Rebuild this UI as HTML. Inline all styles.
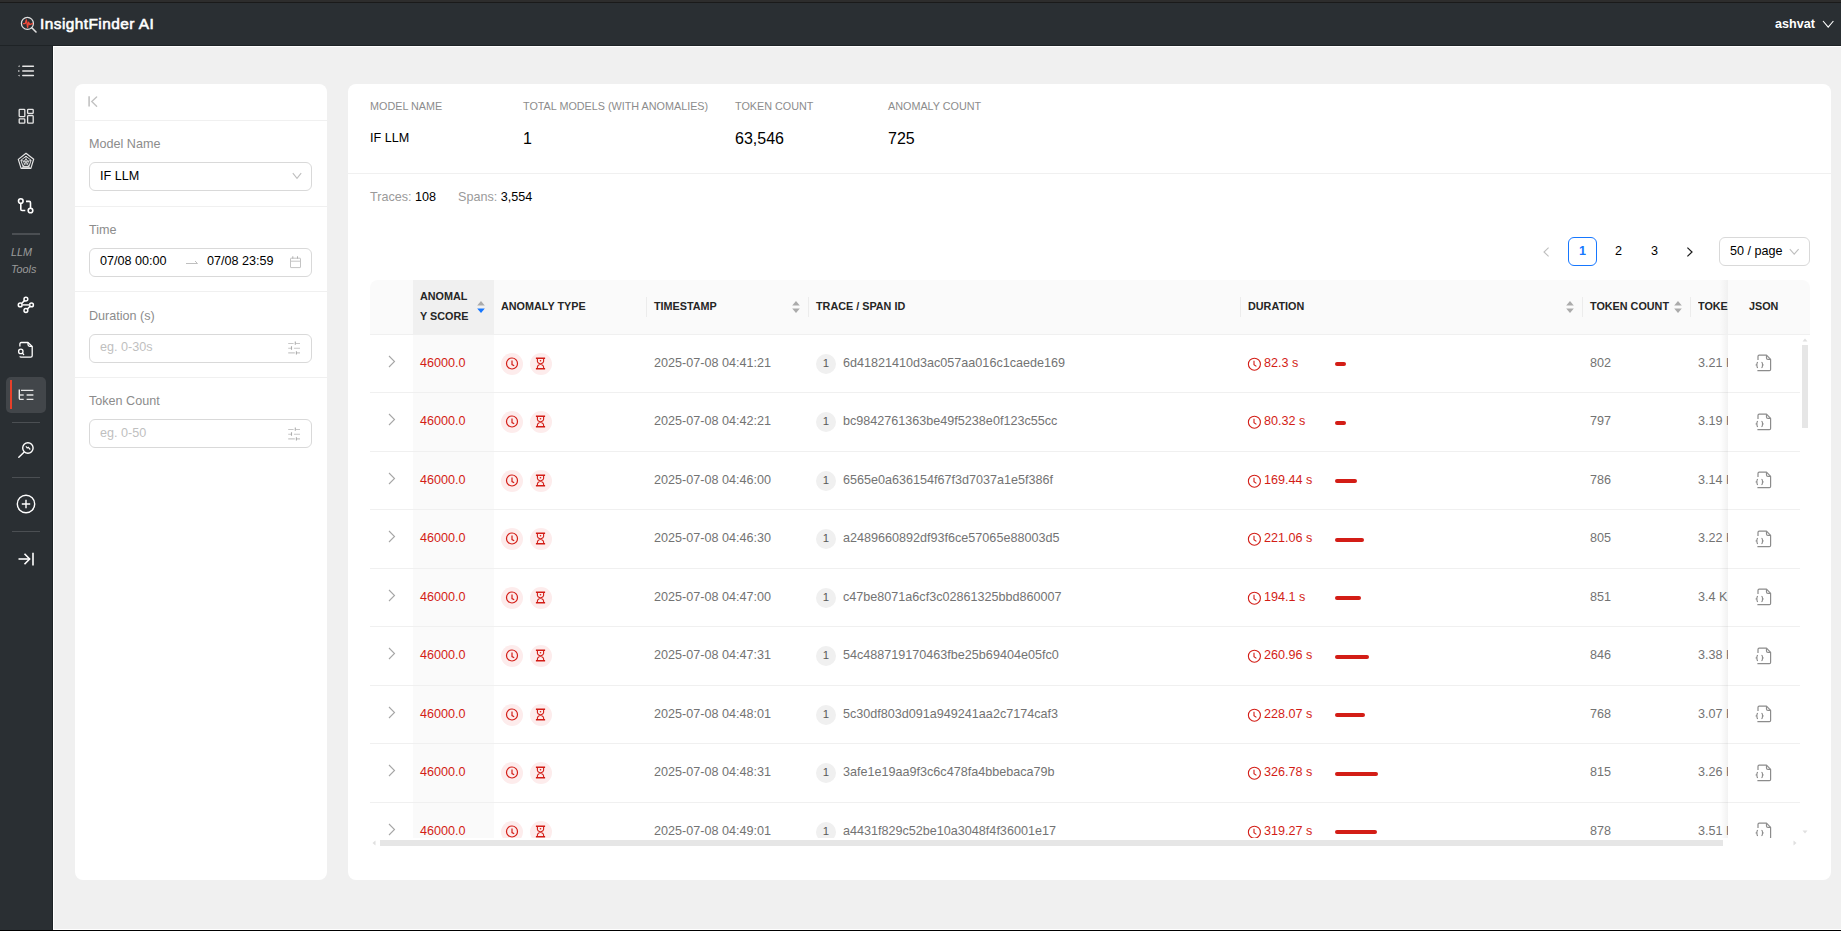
<!DOCTYPE html>
<html><head><meta charset="utf-8"><style>
*{box-sizing:border-box;margin:0;padding:0}
html,body{width:1841px;height:931px;overflow:hidden;background:#f0f0f0;font-family:"Liberation Sans",sans-serif;position:relative}
.a{position:absolute}
svg{position:absolute;overflow:visible}
.panel{background:#fff;border-radius:8px}
.sep{height:1px;background:#f0f0f0}
.lbl{font-size:12.6px;color:#8c8c8c;line-height:20px;white-space:nowrap}
.inp{border:1px solid #d9d9d9;border-radius:6px;background:#fff}
.val{font-size:12.6px;color:#000;line-height:20px;white-space:nowrap}
.ph{font-size:12.6px;color:#bfbfbf;line-height:20px;white-space:nowrap}
.stl{font-size:10.8px;color:#8c8c8c;line-height:16px;white-space:nowrap}
.stv{font-size:16px;color:#000;line-height:20px;white-space:nowrap}
.th{font-size:10.8px;font-weight:bold;color:#262626;line-height:20px;white-space:nowrap}
.c{font-size:12.6px;line-height:20px;white-space:nowrap}
.red{color:#d31d16}
.gray{color:#737373}
.hsep{width:1px;height:20px;background:#ececec;top:297px}
.side-sep{left:12px;width:28px;height:1px;background:#4b4f53}
</style></head><body>
<div class="a" style="left:0;top:0;width:1841px;height:2px;background:#2d2d2d"></div>
<div class="a" style="left:0;top:2px;width:1841px;height:1px;background:#1a1a1a"></div>
<div class="a" style="left:0;top:3px;width:1841px;height:42px;background:#2a2f33"></div>
<div class="a" style="left:0;top:45px;width:1841px;height:1px;background:#1e2326"></div>
<div class="a" style="left:53px;top:46px;width:1788px;height:1px;background:#fff"></div>
<div class="a" style="left:0;top:46px;width:52px;height:884px;background:#2a2f33"></div>
<div class="a" style="left:52px;top:45px;width:1px;height:885px;background:#1e2326"></div>
<div class="a" style="left:53px;top:46px;width:1px;height:884px;background:#fff"></div>
<div class="a" style="left:53px;top:929px;width:1788px;height:1px;background:#fff"></div>
<div class="a" style="left:0;top:930px;width:1841px;height:1px;background:#000"></div>
<svg style="left:19px;top:15px" width="20" height="20" viewBox="0 0 20 20"><circle cx="8.4" cy="8.4" r="6" fill="none" stroke="#e0e0e0" stroke-width="1.3"/><line x1="12.8" y1="12.8" x2="17" y2="17" stroke="#e0e0e0" stroke-width="1.6" stroke-linecap="round"/><path d="M4 8.6 L6.2 8.6 L7.4 4.8 L8.6 12.3 L9.6 7.2 L10.6 9.6 L14 8.4" fill="none" stroke="#ef4a3a" stroke-width="1.3" stroke-linejoin="round"/></svg>
<div class="a" style="left:40px;top:13.5px;font-size:15.4px;font-weight:normal;-webkit-text-stroke:0.6px #fff;color:#fff;letter-spacing:0.45px;line-height:20px;white-space:nowrap">InsightFinder AI</div>
<div class="a" style="left:1775px;top:14px;font-size:12.6px;font-weight:bold;color:#fff;line-height:20px">ashvat</div>
<svg style="left:1822px;top:20px" width="12" height="9" viewBox="0 0 12 9"><path d="M1 1 L6.2 7.2 L11.4 1" fill="none" stroke="#fff" stroke-width="1.1"/></svg>
<svg style="left:17px;top:64px" width="18" height="14" viewBox="0 0 18 14"><path d="M5.8 2.2H16.4M5.8 7H16.4M5.8 11.6H16.4" stroke="#e6e6e6" stroke-width="1.5" stroke-linecap="round"/><path d="M1 2.2L2.6 1.3V3.1Z M1.2 6.2H2.4V7.8H1.2Z M1 11.6L2.6 10.7V12.5Z" fill="#e6e6e6"/></svg>
<svg style="left:18px;top:108px" width="16" height="16" viewBox="0 0 16 16"><g fill="none" stroke="#e6e6e6" stroke-width="1.3"><rect x="1.2" y="1.3" width="5.6" height="7.3" rx="0.7"/><rect x="1.2" y="10.9" width="5.6" height="4.3" rx="0.7"/><rect x="9.6" y="1.3" width="5.6" height="4.2" rx="0.7"/><rect x="9.6" y="7.7" width="5.6" height="7.5" rx="0.7"/></g></svg>
<svg style="left:17px;top:152px" width="18" height="18" viewBox="0 0 18 18"><path d="M4.1 16.4 L13.9 16.4 L12.4 14.4 L5.6 14.4 Z" fill="#b8b8b8"/><g fill="none" stroke="#e6e6e6" stroke-width="1.2" stroke-linejoin="round"><path d="M9 1.3 L16.7 7.2 L13.9 16.4 L4.1 16.4 L1.3 7.4 Z"/><path d="M9 4.2 L14.1 8.3 L12 14.4 L6 14.4 L3.9 8.3 Z" stroke-width="1"/><path d="M9 7.2 L11.5 9.1 L10.6 12 L7.4 12 L6.5 9.1 Z M9 9.9 V4.2 M9 9.9 L14.1 8.3 M9 9.9 L12 14.4 M9 9.9 L6 14.4 M9 9.9 L3.9 8.3" stroke-width="0.8"/></g></svg>
<svg style="left:17px;top:197px" width="18" height="18" viewBox="0 0 18 18"><g fill="none" stroke="#fff" stroke-width="1.6"><circle cx="3.8" cy="4" r="2.3"/><circle cx="13.5" cy="13.5" r="2.3"/><path d="M3.8 6.3 V12.2 Q3.8 13.5 5.1 13.5 H8.3"/><path d="M9 4.4 H12.2 Q13.5 4.4 13.5 5.7 V11.2"/></g></svg>
<div class="a" style="left:12px;top:233px;width:28px;height:2px;background:#4b4f53"></div>
<div class="a" style="left:11px;top:244px;font-size:10.8px;font-style:italic;color:#9b9b9b;line-height:17px;white-space:nowrap">LLM<br>Tools</div>
<svg style="left:17px;top:296px" width="18" height="18" viewBox="0 0 18 18"><g fill="none" stroke="#fff" stroke-width="1.5"><circle cx="3.2" cy="8.9" r="1.9"/><circle cx="8.9" cy="3.2" r="1.9"/><circle cx="14.5" cy="8.9" r="1.9"/><circle cx="8.9" cy="14.5" r="1.9"/><path d="M4.6 7.5 L7.5 4.6 M10.3 13.1 L13.1 10.3"/><path d="M5.1 8.9 H12.6" stroke="#ddd" stroke-width="1.7"/></g></svg>
<svg style="left:17px;top:341px" width="18" height="18" viewBox="0 0 18 18"><g fill="none" stroke="#fff" stroke-width="1.3" stroke-linejoin="round"><path d="M2.9 5.6 V2.9 Q2.9 1.5 4.3 1.5 H11 L15.2 5.5 V14.8 Q15.2 16.2 13.8 16.2 H4.3 Q3 16.2 3 15.2"/><path d="M11 1.6 V3.6 Q11 5.4 12.8 5.4 H15.1"/><circle cx="3.8" cy="10.4" r="2.2"/><path d="M5.5 12.2 L6.7 13.6" stroke-linecap="round"/></g></svg>
<div class="a" style="left:6px;top:377px;width:40px;height:36px;background:#42464a;border-radius:5px"></div>
<div class="a" style="left:10px;top:380px;width:2px;height:29px;background:#e8402a"></div>
<svg style="left:17px;top:388px" width="18" height="14" viewBox="0 0 18 14"><g fill="none" stroke="#e6e6e6" stroke-width="1.4"><path d="M2.3 1.6 V10.2 Q2.3 11.4 3.5 11.4 H6.7"/><path d="M2.3 7 H6.7"/><path d="M4 2.4 H16.4 M9.6 7 H16.4 M9.6 11.4 H16.4"/></g></svg>
<div class="a side-sep" style="top:422px"></div>
<svg style="left:17px;top:441px" width="18" height="18" viewBox="0 0 18 18"><g fill="none" stroke="#fff" stroke-width="1.4"><circle cx="10.9" cy="7" r="5.2"/><path d="M7 11.2 L1.8 16.2" stroke-linecap="round"/><path d="M8.9 5.2 L10.2 7 L11.2 6.3 L13.3 8.5" stroke-width="1.1"/></g></svg>
<div class="a side-sep" style="top:477px"></div>
<svg style="left:16px;top:494px" width="20" height="20" viewBox="0 0 20 20"><g fill="none" stroke="#fff" stroke-width="1.4"><circle cx="10" cy="10" r="8.7"/><path d="M10 5.8 V14.2 M5.8 10 H14.2"/></g></svg>
<div class="a side-sep" style="top:531px"></div>
<svg style="left:17px;top:552px" width="18" height="14" viewBox="0 0 18 14"><g fill="none" stroke="#fff" stroke-width="1.6"><path d="M1.5 7 H12.5"/><path d="M7.5 1.8 L12.6 7 L7.5 12.2"/><path d="M16 0.8 V13.4"/></g></svg>
<div class="a panel" style="left:75px;top:84px;width:252px;height:796px"></div>
<svg style="left:87.8px;top:96px" width="11" height="11" viewBox="0 0 11 11"><path d="M1.1 0.3 V10.5" fill="none" stroke="#c2c2c2" stroke-width="1.6"/><path d="M8.6 1 L3.8 5.6 L8.6 10.2" fill="none" stroke="#c2c2c2" stroke-width="1.4" stroke-linecap="round"/></svg>
<div class="a sep" style="left:75px;top:120px;width:252px"></div>
<div class="a lbl" style="left:89px;top:134px">Model Name</div>
<div class="a inp" style="left:89px;top:162px;width:223px;height:29px"></div>
<div class="a val" style="left:100px;top:166px">IF LLM</div>
<svg style="left:292px;top:172px" width="10" height="8" viewBox="0 0 10 8"><path d="M0.8 1.2 L5 6.4 L9.2 1.2" fill="none" stroke="#bfbfbf" stroke-width="1.1"/></svg>
<div class="a sep" style="left:75px;top:206px;width:252px"></div>
<div class="a lbl" style="left:89px;top:220px">Time</div>
<div class="a inp" style="left:89px;top:248px;width:223px;height:29px"></div>
<div class="a val" style="left:100px;top:251px">07/08 00:00</div>
<svg style="left:185px;top:259px" width="14" height="6" viewBox="0 0 14 6"><path d="M1 4.5 H12.5 L10 2" fill="none" stroke="#bfbfbf" stroke-width="1"/></svg>
<div class="a val" style="left:207px;top:251px">07/08 23:59</div>
<svg style="left:288px;top:256px" width="14" height="13" viewBox="0 0 14 13"><g fill="none" stroke="#c4c4c4" stroke-width="1"><rect x="2.5" y="2.2" width="10" height="9.4" rx="0.4"/><path d="M2.5 5.2 H12.5"/><path d="M4.8 0.3 V2.6 M9.5 0.3 V2.6" stroke="#b0b0b0"/></g></svg>
<div class="a sep" style="left:75px;top:291px;width:252px"></div>
<div class="a lbl" style="left:89px;top:306px">Duration (s)</div>
<div class="a inp" style="left:89px;top:334px;width:223px;height:29px"></div>
<div class="a ph" style="left:100px;top:337px">eg. 0-30s</div>
<svg style="left:288px;top:341px" width="13" height="13" viewBox="0 0 13 13"><g fill="none" stroke="#c8c8c8" stroke-width="1.1"><path d="M0.2 2.5 H5.6 M7.9 2.5 H12 M0.2 7.2 H3.5 M5.9 7.2 H12 M0.2 11.9 H6.8 M8.6 11.9 H12"/></g><g fill="none" stroke="#acacac" stroke-width="1.1"><path d="M7.3 0.4 V3.8 M3.5 5.3 V8.7 M8.4 10.2 V13.6"/></g></svg>
<div class="a sep" style="left:75px;top:377px;width:252px"></div>
<div class="a lbl" style="left:89px;top:391px">Token Count</div>
<div class="a inp" style="left:89px;top:419px;width:223px;height:29px"></div>
<div class="a ph" style="left:100px;top:423px">eg. 0-50</div>
<svg style="left:288px;top:427px" width="13" height="13" viewBox="0 0 13 13"><g fill="none" stroke="#c8c8c8" stroke-width="1.1"><path d="M0.2 2.5 H5.6 M7.9 2.5 H12 M0.2 7.2 H3.5 M5.9 7.2 H12 M0.2 11.9 H6.8 M8.6 11.9 H12"/></g><g fill="none" stroke="#acacac" stroke-width="1.1"><path d="M7.3 0.4 V3.8 M3.5 5.3 V8.7 M8.4 10.2 V13.6"/></g></svg>
<div class="a panel" style="left:348px;top:84px;width:1483px;height:796px"></div>
<div class="a stl" style="left:370px;top:98px">MODEL NAME</div>
<div class="a stl" style="left:523px;top:98px">TOTAL MODELS (WITH ANOMALIES)</div>
<div class="a stl" style="left:735px;top:98px">TOKEN COUNT</div>
<div class="a stl" style="left:888px;top:98px">ANOMALY COUNT</div>
<div class="a val" style="left:370px;top:128px">IF LLM</div>
<div class="a stv" style="left:523px;top:129px">1</div>
<div class="a stv" style="left:735px;top:129px">63,546</div>
<div class="a stv" style="left:888px;top:129px">725</div>
<div class="a sep" style="left:348px;top:173px;width:1483px"></div>
<div class="a c" style="left:370px;top:187px;color:#9a9a9a">Traces: <span style="color:#000">108</span></div>
<div class="a c" style="left:458px;top:187px;color:#9a9a9a">Spans: <span style="color:#000">3,554</span></div>
<svg style="left:1541px;top:246px" width="10" height="12" viewBox="0 0 10 12"><path d="M7.6 1.6 L3 6 L7.6 10.4" fill="none" stroke="#bfbfbf" stroke-width="1.1"/></svg>
<div class="a" style="left:1568px;top:237px;width:29px;height:29px;border:1px solid #1677ff;border-radius:6px;font-size:12.6px;font-weight:bold;color:#1677ff;line-height:26px;text-align:center">1</div>
<div class="a c" style="left:1604.5px;top:241px;width:28px;text-align:center;color:#000">2</div>
<div class="a c" style="left:1640.5px;top:241px;width:28px;text-align:center;color:#000">3</div>
<svg style="left:1685px;top:246px" width="10" height="12" viewBox="0 0 10 12"><path d="M2.4 1.6 L7 6 L2.4 10.4" fill="none" stroke="#1a1a1a" stroke-width="1.2"/></svg>
<div class="a inp" style="left:1719px;top:237px;width:91px;height:29px"></div>
<div class="a val" style="left:1730px;top:241px">50 / page</div>
<svg style="left:1789px;top:248px" width="11" height="8" viewBox="0 0 11 8"><path d="M0.8 1.2 L5.2 6.2 L9.6 1.2" fill="none" stroke="#bfbfbf" stroke-width="1.1"/></svg>
<div class="a" style="left:370px;top:280px;width:1440px;height:55px;background:#fafafa;border-radius:8px 8px 0 0;border-bottom:1px solid #f0f0f0"></div>
<div class="a" style="left:413px;top:280px;width:80.5px;height:54px;background:#f0f0f0"></div>
<div class="a th" style="left:420px;top:286px;line-height:20px">ANOMAL<br>Y SCORE</div>
<svg style="left:477px;top:301px" width="8" height="12" viewBox="0 0 8 12"><path d="M4 0 L7.8 4.6 L0.2 4.6 Z" fill="#ababab"/><path d="M4 12 L7.8 7.4 L0.2 7.4 Z" fill="#1677ff"/></svg>
<div class="a th" style="left:501px;top:296px">ANOMALY TYPE</div>
<div class="a hsep" style="left:646px"></div>
<div class="a th" style="left:654px;top:296px">TIMESTAMP</div>
<svg style="left:792px;top:301px" width="8" height="12" viewBox="0 0 8 12"><path d="M4 0 L7.8 4.6 L0.2 4.6 Z" fill="#ababab"/><path d="M4 12 L7.8 7.4 L0.2 7.4 Z" fill="#ababab"/></svg>
<div class="a hsep" style="left:808px"></div>
<div class="a th" style="left:816px;top:296px">TRACE / SPAN ID</div>
<div class="a hsep" style="left:1240px"></div>
<div class="a th" style="left:1248px;top:296px">DURATION</div>
<svg style="left:1566px;top:301px" width="8" height="12" viewBox="0 0 8 12"><path d="M4 0 L7.8 4.6 L0.2 4.6 Z" fill="#ababab"/><path d="M4 12 L7.8 7.4 L0.2 7.4 Z" fill="#ababab"/></svg>
<div class="a hsep" style="left:1582px"></div>
<div class="a th" style="left:1590px;top:296px">TOKEN COUNT</div>
<svg style="left:1674px;top:301px" width="8" height="12" viewBox="0 0 8 12"><path d="M4 0 L7.8 4.6 L0.2 4.6 Z" fill="#ababab"/><path d="M4 12 L7.8 7.4 L0.2 7.4 Z" fill="#ababab"/></svg>
<div class="a hsep" style="left:1690px"></div>
<div class="a" style="left:1698px;top:296px;width:30px;overflow:hidden"><div class="th">TOKEN COST</div></div>
<div class="a" style="left:370px;top:335px;width:1430px;height:503px;overflow:hidden">
<div class="a" style="left:43px;top:0;width:80.5px;height:503px;background:#fafafa"></div>
<div class="a" style="left:0;top:-0.5px;width:1430px;height:58.5px;border-bottom:1px solid #f0f0f0"></div>
<svg style="left:18px;top:19.5px" width="8" height="13" viewBox="0 0 8 13"><path d="M1 1 L6.5 6.5 L1 12" fill="none" stroke="#a6a6a6" stroke-width="1.1"/></svg>
<div class="a c red" style="left:50px;top:17.5px">46000.0</div>
<div class="a" style="left:131px;top:17.5px;width:22px;height:22px;border-radius:50%;background:#fdecec"></div>
<div class="a" style="left:160px;top:17.5px;width:22px;height:22px;border-radius:50%;background:#fdecec"></div>
<svg style="left:135px;top:21.5px" width="14" height="14" viewBox="0 0 14 14"><g fill="none" stroke="#d31d16" stroke-width="1.2"><circle cx="7" cy="6.5" r="5.5"/><path d="M7 3.4 V7.6 L9.2 8.8"/></g></svg>
<svg style="left:164px;top:21.5px" width="14" height="14" viewBox="0 0 14 14"><g fill="none" stroke="#d31d16" stroke-width="1.1"><path d="M1.9 1.3 H11.1 M1.9 11.8 H11.1" stroke-width="1.6"/><path d="M3.4 1.2 V4.4 Q3.4 5.7 6.5 7.1 Q9.6 5.7 9.6 4.4 V1.2 M3.4 11.9 V9.8 Q3.4 8.5 6.5 7.1 Q9.6 8.5 9.6 9.8 V11.9"/></g><circle cx="6.5" cy="3.8" r="0.8" fill="#d31d16"/></svg>
<div class="a c gray" style="left:284px;top:17.5px">2025-07-08 04:41:21</div>
<div class="a" style="left:446px;top:18.5px;width:20px;height:20px;border-radius:50%;background:#f0f0f0;font-size:11.4px;color:#595959;line-height:18.4px;text-align:center">1</div>
<div class="a c gray" style="left:473px;top:17.5px">6d41821410d3ac057aa016c1caede169</div>
<svg style="left:877px;top:21.5px" width="14" height="14" viewBox="0 0 14 14"><g fill="none" stroke="#d31d16" stroke-width="1.1"><circle cx="7.4" cy="7.2" r="6"/><path d="M7 3.8 V7.8 L9.4 9.4"/></g></svg>
<div class="a c red" style="left:894px;top:17.5px">82.3 s</div>
<div class="a" style="left:965px;top:27.0px;width:11px;height:4.4px;border-radius:3px;background:#d31d16"></div>
<div class="a c gray" style="left:1220px;top:17.5px">802</div>
<div class="a" style="left:1328px;top:17.5px;width:30px;overflow:hidden"><div class="c gray">3.21 K</div></div>
<div class="a" style="left:0;top:58.0px;width:1430px;height:58.5px;border-bottom:1px solid #f0f0f0"></div>
<svg style="left:18px;top:78.0px" width="8" height="13" viewBox="0 0 8 13"><path d="M1 1 L6.5 6.5 L1 12" fill="none" stroke="#a6a6a6" stroke-width="1.1"/></svg>
<div class="a c red" style="left:50px;top:76.0px">46000.0</div>
<div class="a" style="left:131px;top:76.0px;width:22px;height:22px;border-radius:50%;background:#fdecec"></div>
<div class="a" style="left:160px;top:76.0px;width:22px;height:22px;border-radius:50%;background:#fdecec"></div>
<svg style="left:135px;top:80.0px" width="14" height="14" viewBox="0 0 14 14"><g fill="none" stroke="#d31d16" stroke-width="1.2"><circle cx="7" cy="6.5" r="5.5"/><path d="M7 3.4 V7.6 L9.2 8.8"/></g></svg>
<svg style="left:164px;top:80.0px" width="14" height="14" viewBox="0 0 14 14"><g fill="none" stroke="#d31d16" stroke-width="1.1"><path d="M1.9 1.3 H11.1 M1.9 11.8 H11.1" stroke-width="1.6"/><path d="M3.4 1.2 V4.4 Q3.4 5.7 6.5 7.1 Q9.6 5.7 9.6 4.4 V1.2 M3.4 11.9 V9.8 Q3.4 8.5 6.5 7.1 Q9.6 8.5 9.6 9.8 V11.9"/></g><circle cx="6.5" cy="3.8" r="0.8" fill="#d31d16"/></svg>
<div class="a c gray" style="left:284px;top:76.0px">2025-07-08 04:42:21</div>
<div class="a" style="left:446px;top:77.0px;width:20px;height:20px;border-radius:50%;background:#f0f0f0;font-size:11.4px;color:#595959;line-height:18.4px;text-align:center">1</div>
<div class="a c gray" style="left:473px;top:76.0px">bc9842761363be49f5238e0f123c55cc</div>
<svg style="left:877px;top:80.0px" width="14" height="14" viewBox="0 0 14 14"><g fill="none" stroke="#d31d16" stroke-width="1.1"><circle cx="7.4" cy="7.2" r="6"/><path d="M7 3.8 V7.8 L9.4 9.4"/></g></svg>
<div class="a c red" style="left:894px;top:76.0px">80.32 s</div>
<div class="a" style="left:965px;top:85.5px;width:10.5px;height:4.4px;border-radius:3px;background:#d31d16"></div>
<div class="a c gray" style="left:1220px;top:76.0px">797</div>
<div class="a" style="left:1328px;top:76.0px;width:30px;overflow:hidden"><div class="c gray">3.19 K</div></div>
<div class="a" style="left:0;top:116.5px;width:1430px;height:58.5px;border-bottom:1px solid #f0f0f0"></div>
<svg style="left:18px;top:136.5px" width="8" height="13" viewBox="0 0 8 13"><path d="M1 1 L6.5 6.5 L1 12" fill="none" stroke="#a6a6a6" stroke-width="1.1"/></svg>
<div class="a c red" style="left:50px;top:134.5px">46000.0</div>
<div class="a" style="left:131px;top:134.5px;width:22px;height:22px;border-radius:50%;background:#fdecec"></div>
<div class="a" style="left:160px;top:134.5px;width:22px;height:22px;border-radius:50%;background:#fdecec"></div>
<svg style="left:135px;top:138.5px" width="14" height="14" viewBox="0 0 14 14"><g fill="none" stroke="#d31d16" stroke-width="1.2"><circle cx="7" cy="6.5" r="5.5"/><path d="M7 3.4 V7.6 L9.2 8.8"/></g></svg>
<svg style="left:164px;top:138.5px" width="14" height="14" viewBox="0 0 14 14"><g fill="none" stroke="#d31d16" stroke-width="1.1"><path d="M1.9 1.3 H11.1 M1.9 11.8 H11.1" stroke-width="1.6"/><path d="M3.4 1.2 V4.4 Q3.4 5.7 6.5 7.1 Q9.6 5.7 9.6 4.4 V1.2 M3.4 11.9 V9.8 Q3.4 8.5 6.5 7.1 Q9.6 8.5 9.6 9.8 V11.9"/></g><circle cx="6.5" cy="3.8" r="0.8" fill="#d31d16"/></svg>
<div class="a c gray" style="left:284px;top:134.5px">2025-07-08 04:46:00</div>
<div class="a" style="left:446px;top:135.5px;width:20px;height:20px;border-radius:50%;background:#f0f0f0;font-size:11.4px;color:#595959;line-height:18.4px;text-align:center">1</div>
<div class="a c gray" style="left:473px;top:134.5px">6565e0a636154f67f3d7037a1e5f386f</div>
<svg style="left:877px;top:138.5px" width="14" height="14" viewBox="0 0 14 14"><g fill="none" stroke="#d31d16" stroke-width="1.1"><circle cx="7.4" cy="7.2" r="6"/><path d="M7 3.8 V7.8 L9.4 9.4"/></g></svg>
<div class="a c red" style="left:894px;top:134.5px">169.44 s</div>
<div class="a" style="left:965px;top:144.0px;width:22px;height:4.4px;border-radius:3px;background:#d31d16"></div>
<div class="a c gray" style="left:1220px;top:134.5px">786</div>
<div class="a" style="left:1328px;top:134.5px;width:30px;overflow:hidden"><div class="c gray">3.14 K</div></div>
<div class="a" style="left:0;top:175.0px;width:1430px;height:58.5px;border-bottom:1px solid #f0f0f0"></div>
<svg style="left:18px;top:195.0px" width="8" height="13" viewBox="0 0 8 13"><path d="M1 1 L6.5 6.5 L1 12" fill="none" stroke="#a6a6a6" stroke-width="1.1"/></svg>
<div class="a c red" style="left:50px;top:193.0px">46000.0</div>
<div class="a" style="left:131px;top:193.0px;width:22px;height:22px;border-radius:50%;background:#fdecec"></div>
<div class="a" style="left:160px;top:193.0px;width:22px;height:22px;border-radius:50%;background:#fdecec"></div>
<svg style="left:135px;top:197.0px" width="14" height="14" viewBox="0 0 14 14"><g fill="none" stroke="#d31d16" stroke-width="1.2"><circle cx="7" cy="6.5" r="5.5"/><path d="M7 3.4 V7.6 L9.2 8.8"/></g></svg>
<svg style="left:164px;top:197.0px" width="14" height="14" viewBox="0 0 14 14"><g fill="none" stroke="#d31d16" stroke-width="1.1"><path d="M1.9 1.3 H11.1 M1.9 11.8 H11.1" stroke-width="1.6"/><path d="M3.4 1.2 V4.4 Q3.4 5.7 6.5 7.1 Q9.6 5.7 9.6 4.4 V1.2 M3.4 11.9 V9.8 Q3.4 8.5 6.5 7.1 Q9.6 8.5 9.6 9.8 V11.9"/></g><circle cx="6.5" cy="3.8" r="0.8" fill="#d31d16"/></svg>
<div class="a c gray" style="left:284px;top:193.0px">2025-07-08 04:46:30</div>
<div class="a" style="left:446px;top:194.0px;width:20px;height:20px;border-radius:50%;background:#f0f0f0;font-size:11.4px;color:#595959;line-height:18.4px;text-align:center">1</div>
<div class="a c gray" style="left:473px;top:193.0px">a2489660892df93f6ce57065e88003d5</div>
<svg style="left:877px;top:197.0px" width="14" height="14" viewBox="0 0 14 14"><g fill="none" stroke="#d31d16" stroke-width="1.1"><circle cx="7.4" cy="7.2" r="6"/><path d="M7 3.8 V7.8 L9.4 9.4"/></g></svg>
<div class="a c red" style="left:894px;top:193.0px">221.06 s</div>
<div class="a" style="left:965px;top:202.5px;width:29px;height:4.4px;border-radius:3px;background:#d31d16"></div>
<div class="a c gray" style="left:1220px;top:193.0px">805</div>
<div class="a" style="left:1328px;top:193.0px;width:30px;overflow:hidden"><div class="c gray">3.22 K</div></div>
<div class="a" style="left:0;top:233.5px;width:1430px;height:58.5px;border-bottom:1px solid #f0f0f0"></div>
<svg style="left:18px;top:253.5px" width="8" height="13" viewBox="0 0 8 13"><path d="M1 1 L6.5 6.5 L1 12" fill="none" stroke="#a6a6a6" stroke-width="1.1"/></svg>
<div class="a c red" style="left:50px;top:251.5px">46000.0</div>
<div class="a" style="left:131px;top:251.5px;width:22px;height:22px;border-radius:50%;background:#fdecec"></div>
<div class="a" style="left:160px;top:251.5px;width:22px;height:22px;border-radius:50%;background:#fdecec"></div>
<svg style="left:135px;top:255.5px" width="14" height="14" viewBox="0 0 14 14"><g fill="none" stroke="#d31d16" stroke-width="1.2"><circle cx="7" cy="6.5" r="5.5"/><path d="M7 3.4 V7.6 L9.2 8.8"/></g></svg>
<svg style="left:164px;top:255.5px" width="14" height="14" viewBox="0 0 14 14"><g fill="none" stroke="#d31d16" stroke-width="1.1"><path d="M1.9 1.3 H11.1 M1.9 11.8 H11.1" stroke-width="1.6"/><path d="M3.4 1.2 V4.4 Q3.4 5.7 6.5 7.1 Q9.6 5.7 9.6 4.4 V1.2 M3.4 11.9 V9.8 Q3.4 8.5 6.5 7.1 Q9.6 8.5 9.6 9.8 V11.9"/></g><circle cx="6.5" cy="3.8" r="0.8" fill="#d31d16"/></svg>
<div class="a c gray" style="left:284px;top:251.5px">2025-07-08 04:47:00</div>
<div class="a" style="left:446px;top:252.5px;width:20px;height:20px;border-radius:50%;background:#f0f0f0;font-size:11.4px;color:#595959;line-height:18.4px;text-align:center">1</div>
<div class="a c gray" style="left:473px;top:251.5px">c47be8071a6cf3c02861325bbd860007</div>
<svg style="left:877px;top:255.5px" width="14" height="14" viewBox="0 0 14 14"><g fill="none" stroke="#d31d16" stroke-width="1.1"><circle cx="7.4" cy="7.2" r="6"/><path d="M7 3.8 V7.8 L9.4 9.4"/></g></svg>
<div class="a c red" style="left:894px;top:251.5px">194.1 s</div>
<div class="a" style="left:965px;top:261.0px;width:25.5px;height:4.4px;border-radius:3px;background:#d31d16"></div>
<div class="a c gray" style="left:1220px;top:251.5px">851</div>
<div class="a" style="left:1328px;top:251.5px;width:30px;overflow:hidden"><div class="c gray">3.4 K</div></div>
<div class="a" style="left:0;top:292.0px;width:1430px;height:58.5px;border-bottom:1px solid #f0f0f0"></div>
<svg style="left:18px;top:312.0px" width="8" height="13" viewBox="0 0 8 13"><path d="M1 1 L6.5 6.5 L1 12" fill="none" stroke="#a6a6a6" stroke-width="1.1"/></svg>
<div class="a c red" style="left:50px;top:310.0px">46000.0</div>
<div class="a" style="left:131px;top:310.0px;width:22px;height:22px;border-radius:50%;background:#fdecec"></div>
<div class="a" style="left:160px;top:310.0px;width:22px;height:22px;border-radius:50%;background:#fdecec"></div>
<svg style="left:135px;top:314.0px" width="14" height="14" viewBox="0 0 14 14"><g fill="none" stroke="#d31d16" stroke-width="1.2"><circle cx="7" cy="6.5" r="5.5"/><path d="M7 3.4 V7.6 L9.2 8.8"/></g></svg>
<svg style="left:164px;top:314.0px" width="14" height="14" viewBox="0 0 14 14"><g fill="none" stroke="#d31d16" stroke-width="1.1"><path d="M1.9 1.3 H11.1 M1.9 11.8 H11.1" stroke-width="1.6"/><path d="M3.4 1.2 V4.4 Q3.4 5.7 6.5 7.1 Q9.6 5.7 9.6 4.4 V1.2 M3.4 11.9 V9.8 Q3.4 8.5 6.5 7.1 Q9.6 8.5 9.6 9.8 V11.9"/></g><circle cx="6.5" cy="3.8" r="0.8" fill="#d31d16"/></svg>
<div class="a c gray" style="left:284px;top:310.0px">2025-07-08 04:47:31</div>
<div class="a" style="left:446px;top:311.0px;width:20px;height:20px;border-radius:50%;background:#f0f0f0;font-size:11.4px;color:#595959;line-height:18.4px;text-align:center">1</div>
<div class="a c gray" style="left:473px;top:310.0px">54c488719170463fbe25b69404e05fc0</div>
<svg style="left:877px;top:314.0px" width="14" height="14" viewBox="0 0 14 14"><g fill="none" stroke="#d31d16" stroke-width="1.1"><circle cx="7.4" cy="7.2" r="6"/><path d="M7 3.8 V7.8 L9.4 9.4"/></g></svg>
<div class="a c red" style="left:894px;top:310.0px">260.96 s</div>
<div class="a" style="left:965px;top:319.5px;width:34px;height:4.4px;border-radius:3px;background:#d31d16"></div>
<div class="a c gray" style="left:1220px;top:310.0px">846</div>
<div class="a" style="left:1328px;top:310.0px;width:30px;overflow:hidden"><div class="c gray">3.38 K</div></div>
<div class="a" style="left:0;top:350.5px;width:1430px;height:58.5px;border-bottom:1px solid #f0f0f0"></div>
<svg style="left:18px;top:370.5px" width="8" height="13" viewBox="0 0 8 13"><path d="M1 1 L6.5 6.5 L1 12" fill="none" stroke="#a6a6a6" stroke-width="1.1"/></svg>
<div class="a c red" style="left:50px;top:368.5px">46000.0</div>
<div class="a" style="left:131px;top:368.5px;width:22px;height:22px;border-radius:50%;background:#fdecec"></div>
<div class="a" style="left:160px;top:368.5px;width:22px;height:22px;border-radius:50%;background:#fdecec"></div>
<svg style="left:135px;top:372.5px" width="14" height="14" viewBox="0 0 14 14"><g fill="none" stroke="#d31d16" stroke-width="1.2"><circle cx="7" cy="6.5" r="5.5"/><path d="M7 3.4 V7.6 L9.2 8.8"/></g></svg>
<svg style="left:164px;top:372.5px" width="14" height="14" viewBox="0 0 14 14"><g fill="none" stroke="#d31d16" stroke-width="1.1"><path d="M1.9 1.3 H11.1 M1.9 11.8 H11.1" stroke-width="1.6"/><path d="M3.4 1.2 V4.4 Q3.4 5.7 6.5 7.1 Q9.6 5.7 9.6 4.4 V1.2 M3.4 11.9 V9.8 Q3.4 8.5 6.5 7.1 Q9.6 8.5 9.6 9.8 V11.9"/></g><circle cx="6.5" cy="3.8" r="0.8" fill="#d31d16"/></svg>
<div class="a c gray" style="left:284px;top:368.5px">2025-07-08 04:48:01</div>
<div class="a" style="left:446px;top:369.5px;width:20px;height:20px;border-radius:50%;background:#f0f0f0;font-size:11.4px;color:#595959;line-height:18.4px;text-align:center">1</div>
<div class="a c gray" style="left:473px;top:368.5px">5c30df803d091a949241aa2c7174caf3</div>
<svg style="left:877px;top:372.5px" width="14" height="14" viewBox="0 0 14 14"><g fill="none" stroke="#d31d16" stroke-width="1.1"><circle cx="7.4" cy="7.2" r="6"/><path d="M7 3.8 V7.8 L9.4 9.4"/></g></svg>
<div class="a c red" style="left:894px;top:368.5px">228.07 s</div>
<div class="a" style="left:965px;top:378.0px;width:30px;height:4.4px;border-radius:3px;background:#d31d16"></div>
<div class="a c gray" style="left:1220px;top:368.5px">768</div>
<div class="a" style="left:1328px;top:368.5px;width:30px;overflow:hidden"><div class="c gray">3.07 K</div></div>
<div class="a" style="left:0;top:409.0px;width:1430px;height:58.5px;border-bottom:1px solid #f0f0f0"></div>
<svg style="left:18px;top:429.0px" width="8" height="13" viewBox="0 0 8 13"><path d="M1 1 L6.5 6.5 L1 12" fill="none" stroke="#a6a6a6" stroke-width="1.1"/></svg>
<div class="a c red" style="left:50px;top:427.0px">46000.0</div>
<div class="a" style="left:131px;top:427.0px;width:22px;height:22px;border-radius:50%;background:#fdecec"></div>
<div class="a" style="left:160px;top:427.0px;width:22px;height:22px;border-radius:50%;background:#fdecec"></div>
<svg style="left:135px;top:431.0px" width="14" height="14" viewBox="0 0 14 14"><g fill="none" stroke="#d31d16" stroke-width="1.2"><circle cx="7" cy="6.5" r="5.5"/><path d="M7 3.4 V7.6 L9.2 8.8"/></g></svg>
<svg style="left:164px;top:431.0px" width="14" height="14" viewBox="0 0 14 14"><g fill="none" stroke="#d31d16" stroke-width="1.1"><path d="M1.9 1.3 H11.1 M1.9 11.8 H11.1" stroke-width="1.6"/><path d="M3.4 1.2 V4.4 Q3.4 5.7 6.5 7.1 Q9.6 5.7 9.6 4.4 V1.2 M3.4 11.9 V9.8 Q3.4 8.5 6.5 7.1 Q9.6 8.5 9.6 9.8 V11.9"/></g><circle cx="6.5" cy="3.8" r="0.8" fill="#d31d16"/></svg>
<div class="a c gray" style="left:284px;top:427.0px">2025-07-08 04:48:31</div>
<div class="a" style="left:446px;top:428.0px;width:20px;height:20px;border-radius:50%;background:#f0f0f0;font-size:11.4px;color:#595959;line-height:18.4px;text-align:center">1</div>
<div class="a c gray" style="left:473px;top:427.0px">3afe1e19aa9f3c6c478fa4bbebaca79b</div>
<svg style="left:877px;top:431.0px" width="14" height="14" viewBox="0 0 14 14"><g fill="none" stroke="#d31d16" stroke-width="1.1"><circle cx="7.4" cy="7.2" r="6"/><path d="M7 3.8 V7.8 L9.4 9.4"/></g></svg>
<div class="a c red" style="left:894px;top:427.0px">326.78 s</div>
<div class="a" style="left:965px;top:436.5px;width:43px;height:4.4px;border-radius:3px;background:#d31d16"></div>
<div class="a c gray" style="left:1220px;top:427.0px">815</div>
<div class="a" style="left:1328px;top:427.0px;width:30px;overflow:hidden"><div class="c gray">3.26 K</div></div>
<div class="a" style="left:0;top:467.5px;width:1430px;height:58.5px;border-bottom:1px solid #f0f0f0"></div>
<svg style="left:18px;top:487.5px" width="8" height="13" viewBox="0 0 8 13"><path d="M1 1 L6.5 6.5 L1 12" fill="none" stroke="#a6a6a6" stroke-width="1.1"/></svg>
<div class="a c red" style="left:50px;top:485.5px">46000.0</div>
<div class="a" style="left:131px;top:485.5px;width:22px;height:22px;border-radius:50%;background:#fdecec"></div>
<div class="a" style="left:160px;top:485.5px;width:22px;height:22px;border-radius:50%;background:#fdecec"></div>
<svg style="left:135px;top:489.5px" width="14" height="14" viewBox="0 0 14 14"><g fill="none" stroke="#d31d16" stroke-width="1.2"><circle cx="7" cy="6.5" r="5.5"/><path d="M7 3.4 V7.6 L9.2 8.8"/></g></svg>
<svg style="left:164px;top:489.5px" width="14" height="14" viewBox="0 0 14 14"><g fill="none" stroke="#d31d16" stroke-width="1.1"><path d="M1.9 1.3 H11.1 M1.9 11.8 H11.1" stroke-width="1.6"/><path d="M3.4 1.2 V4.4 Q3.4 5.7 6.5 7.1 Q9.6 5.7 9.6 4.4 V1.2 M3.4 11.9 V9.8 Q3.4 8.5 6.5 7.1 Q9.6 8.5 9.6 9.8 V11.9"/></g><circle cx="6.5" cy="3.8" r="0.8" fill="#d31d16"/></svg>
<div class="a c gray" style="left:284px;top:485.5px">2025-07-08 04:49:01</div>
<div class="a" style="left:446px;top:486.5px;width:20px;height:20px;border-radius:50%;background:#f0f0f0;font-size:11.4px;color:#595959;line-height:18.4px;text-align:center">1</div>
<div class="a c gray" style="left:473px;top:485.5px">a4431f829c52be10a3048f4f36001e17</div>
<svg style="left:877px;top:489.5px" width="14" height="14" viewBox="0 0 14 14"><g fill="none" stroke="#d31d16" stroke-width="1.1"><circle cx="7.4" cy="7.2" r="6"/><path d="M7 3.8 V7.8 L9.4 9.4"/></g></svg>
<div class="a c red" style="left:894px;top:485.5px">319.27 s</div>
<div class="a" style="left:965px;top:495.0px;width:42px;height:4.4px;border-radius:3px;background:#d31d16"></div>
<div class="a c gray" style="left:1220px;top:485.5px">878</div>
<div class="a" style="left:1328px;top:485.5px;width:30px;overflow:hidden"><div class="c gray">3.51 K</div></div>
<div class="a" style="left:1350px;top:0;width:8px;height:503px;background:linear-gradient(to right,rgba(0,0,0,0),rgba(0,0,0,0.05))"></div>
<div class="a" style="left:1358px;top:0;width:72px;height:503px;background:#fff"></div>
<div class="a" style="left:1358px;top:-0.5px;width:72px;height:58.5px;border-bottom:1px solid #f0f0f0"></div>
<svg style="left:1385px;top:19.0px" width="17" height="18" viewBox="0 0 17 18"><g fill="none" stroke="#8c8c8c" stroke-width="1.2" stroke-linejoin="round"><path d="M3 6 V2.4 Q3 1.2 4.2 1.2 H11.5 L15.6 5.4 V15.4 Q15.6 16.6 14.4 16.6 H2.4"/><path d="M11.5 1.2 V3.9 Q11.5 5.4 13 5.4 H15.6"/><path d="M3 8.2 Q2 8.2 2 9.2 V10.2 Q2 10.9 1.1 10.9 Q2 10.9 2 11.6 V12.6 Q2 13.6 3 13.6 M6.4 8.2 Q7.4 8.2 7.4 9.2 V10.2 Q7.4 10.9 8.2 10.9 Q7.4 10.9 7.4 11.6 V12.6 Q7.4 13.6 6.4 13.6" stroke-width="1.1"/></g></svg>
<div class="a" style="left:1358px;top:58.0px;width:72px;height:58.5px;border-bottom:1px solid #f0f0f0"></div>
<svg style="left:1385px;top:77.5px" width="17" height="18" viewBox="0 0 17 18"><g fill="none" stroke="#8c8c8c" stroke-width="1.2" stroke-linejoin="round"><path d="M3 6 V2.4 Q3 1.2 4.2 1.2 H11.5 L15.6 5.4 V15.4 Q15.6 16.6 14.4 16.6 H2.4"/><path d="M11.5 1.2 V3.9 Q11.5 5.4 13 5.4 H15.6"/><path d="M3 8.2 Q2 8.2 2 9.2 V10.2 Q2 10.9 1.1 10.9 Q2 10.9 2 11.6 V12.6 Q2 13.6 3 13.6 M6.4 8.2 Q7.4 8.2 7.4 9.2 V10.2 Q7.4 10.9 8.2 10.9 Q7.4 10.9 7.4 11.6 V12.6 Q7.4 13.6 6.4 13.6" stroke-width="1.1"/></g></svg>
<div class="a" style="left:1358px;top:116.5px;width:72px;height:58.5px;border-bottom:1px solid #f0f0f0"></div>
<svg style="left:1385px;top:136.0px" width="17" height="18" viewBox="0 0 17 18"><g fill="none" stroke="#8c8c8c" stroke-width="1.2" stroke-linejoin="round"><path d="M3 6 V2.4 Q3 1.2 4.2 1.2 H11.5 L15.6 5.4 V15.4 Q15.6 16.6 14.4 16.6 H2.4"/><path d="M11.5 1.2 V3.9 Q11.5 5.4 13 5.4 H15.6"/><path d="M3 8.2 Q2 8.2 2 9.2 V10.2 Q2 10.9 1.1 10.9 Q2 10.9 2 11.6 V12.6 Q2 13.6 3 13.6 M6.4 8.2 Q7.4 8.2 7.4 9.2 V10.2 Q7.4 10.9 8.2 10.9 Q7.4 10.9 7.4 11.6 V12.6 Q7.4 13.6 6.4 13.6" stroke-width="1.1"/></g></svg>
<div class="a" style="left:1358px;top:175.0px;width:72px;height:58.5px;border-bottom:1px solid #f0f0f0"></div>
<svg style="left:1385px;top:194.5px" width="17" height="18" viewBox="0 0 17 18"><g fill="none" stroke="#8c8c8c" stroke-width="1.2" stroke-linejoin="round"><path d="M3 6 V2.4 Q3 1.2 4.2 1.2 H11.5 L15.6 5.4 V15.4 Q15.6 16.6 14.4 16.6 H2.4"/><path d="M11.5 1.2 V3.9 Q11.5 5.4 13 5.4 H15.6"/><path d="M3 8.2 Q2 8.2 2 9.2 V10.2 Q2 10.9 1.1 10.9 Q2 10.9 2 11.6 V12.6 Q2 13.6 3 13.6 M6.4 8.2 Q7.4 8.2 7.4 9.2 V10.2 Q7.4 10.9 8.2 10.9 Q7.4 10.9 7.4 11.6 V12.6 Q7.4 13.6 6.4 13.6" stroke-width="1.1"/></g></svg>
<div class="a" style="left:1358px;top:233.5px;width:72px;height:58.5px;border-bottom:1px solid #f0f0f0"></div>
<svg style="left:1385px;top:253.0px" width="17" height="18" viewBox="0 0 17 18"><g fill="none" stroke="#8c8c8c" stroke-width="1.2" stroke-linejoin="round"><path d="M3 6 V2.4 Q3 1.2 4.2 1.2 H11.5 L15.6 5.4 V15.4 Q15.6 16.6 14.4 16.6 H2.4"/><path d="M11.5 1.2 V3.9 Q11.5 5.4 13 5.4 H15.6"/><path d="M3 8.2 Q2 8.2 2 9.2 V10.2 Q2 10.9 1.1 10.9 Q2 10.9 2 11.6 V12.6 Q2 13.6 3 13.6 M6.4 8.2 Q7.4 8.2 7.4 9.2 V10.2 Q7.4 10.9 8.2 10.9 Q7.4 10.9 7.4 11.6 V12.6 Q7.4 13.6 6.4 13.6" stroke-width="1.1"/></g></svg>
<div class="a" style="left:1358px;top:292.0px;width:72px;height:58.5px;border-bottom:1px solid #f0f0f0"></div>
<svg style="left:1385px;top:311.5px" width="17" height="18" viewBox="0 0 17 18"><g fill="none" stroke="#8c8c8c" stroke-width="1.2" stroke-linejoin="round"><path d="M3 6 V2.4 Q3 1.2 4.2 1.2 H11.5 L15.6 5.4 V15.4 Q15.6 16.6 14.4 16.6 H2.4"/><path d="M11.5 1.2 V3.9 Q11.5 5.4 13 5.4 H15.6"/><path d="M3 8.2 Q2 8.2 2 9.2 V10.2 Q2 10.9 1.1 10.9 Q2 10.9 2 11.6 V12.6 Q2 13.6 3 13.6 M6.4 8.2 Q7.4 8.2 7.4 9.2 V10.2 Q7.4 10.9 8.2 10.9 Q7.4 10.9 7.4 11.6 V12.6 Q7.4 13.6 6.4 13.6" stroke-width="1.1"/></g></svg>
<div class="a" style="left:1358px;top:350.5px;width:72px;height:58.5px;border-bottom:1px solid #f0f0f0"></div>
<svg style="left:1385px;top:370.0px" width="17" height="18" viewBox="0 0 17 18"><g fill="none" stroke="#8c8c8c" stroke-width="1.2" stroke-linejoin="round"><path d="M3 6 V2.4 Q3 1.2 4.2 1.2 H11.5 L15.6 5.4 V15.4 Q15.6 16.6 14.4 16.6 H2.4"/><path d="M11.5 1.2 V3.9 Q11.5 5.4 13 5.4 H15.6"/><path d="M3 8.2 Q2 8.2 2 9.2 V10.2 Q2 10.9 1.1 10.9 Q2 10.9 2 11.6 V12.6 Q2 13.6 3 13.6 M6.4 8.2 Q7.4 8.2 7.4 9.2 V10.2 Q7.4 10.9 8.2 10.9 Q7.4 10.9 7.4 11.6 V12.6 Q7.4 13.6 6.4 13.6" stroke-width="1.1"/></g></svg>
<div class="a" style="left:1358px;top:409.0px;width:72px;height:58.5px;border-bottom:1px solid #f0f0f0"></div>
<svg style="left:1385px;top:428.5px" width="17" height="18" viewBox="0 0 17 18"><g fill="none" stroke="#8c8c8c" stroke-width="1.2" stroke-linejoin="round"><path d="M3 6 V2.4 Q3 1.2 4.2 1.2 H11.5 L15.6 5.4 V15.4 Q15.6 16.6 14.4 16.6 H2.4"/><path d="M11.5 1.2 V3.9 Q11.5 5.4 13 5.4 H15.6"/><path d="M3 8.2 Q2 8.2 2 9.2 V10.2 Q2 10.9 1.1 10.9 Q2 10.9 2 11.6 V12.6 Q2 13.6 3 13.6 M6.4 8.2 Q7.4 8.2 7.4 9.2 V10.2 Q7.4 10.9 8.2 10.9 Q7.4 10.9 7.4 11.6 V12.6 Q7.4 13.6 6.4 13.6" stroke-width="1.1"/></g></svg>
<div class="a" style="left:1358px;top:467.5px;width:72px;height:58.5px;border-bottom:1px solid #f0f0f0"></div>
<svg style="left:1385px;top:487.0px" width="17" height="18" viewBox="0 0 17 18"><g fill="none" stroke="#8c8c8c" stroke-width="1.2" stroke-linejoin="round"><path d="M3 6 V2.4 Q3 1.2 4.2 1.2 H11.5 L15.6 5.4 V15.4 Q15.6 16.6 14.4 16.6 H2.4"/><path d="M11.5 1.2 V3.9 Q11.5 5.4 13 5.4 H15.6"/><path d="M3 8.2 Q2 8.2 2 9.2 V10.2 Q2 10.9 1.1 10.9 Q2 10.9 2 11.6 V12.6 Q2 13.6 3 13.6 M6.4 8.2 Q7.4 8.2 7.4 9.2 V10.2 Q7.4 10.9 8.2 10.9 Q7.4 10.9 7.4 11.6 V12.6 Q7.4 13.6 6.4 13.6" stroke-width="1.1"/></g></svg>
</div>
<div class="a" style="left:1720px;top:280px;width:8px;height:54px;background:linear-gradient(to right,rgba(0,0,0,0),rgba(0,0,0,0.04))"></div>
<div class="a" style="left:1728px;top:280px;width:72px;height:54px;background:#fafafa"></div>
<div class="a th" style="left:1749px;top:296px">JSON</div>
<div class="a" style="left:1802px;top:345px;width:6px;height:83px;background:#e6e6e6"></div>
<svg style="left:1802px;top:338px" width="6" height="4" viewBox="0 0 6 4"><path d="M0.5 3.5 L3 0.5 L5.5 3.5Z" fill="#e0e0e0"/></svg>
<svg style="left:1802px;top:830px" width="6" height="4" viewBox="0 0 6 4"><path d="M0.5 0.5 L3 3.5 L5.5 0.5Z" fill="#e0e0e0"/></svg>
<div class="a" style="left:380px;top:840px;width:1343px;height:6px;background:#e6e6e6"></div>
<svg style="left:372px;top:840px" width="4" height="6" viewBox="0 0 4 6"><path d="M3.5 0.5 L0.5 3 L3.5 5.5Z" fill="#e0e0e0"/></svg>
<svg style="left:1793px;top:840px" width="4" height="6" viewBox="0 0 4 6"><path d="M0.5 0.5 L3.5 3 L0.5 5.5Z" fill="#e0e0e0"/></svg>
</body></html>
